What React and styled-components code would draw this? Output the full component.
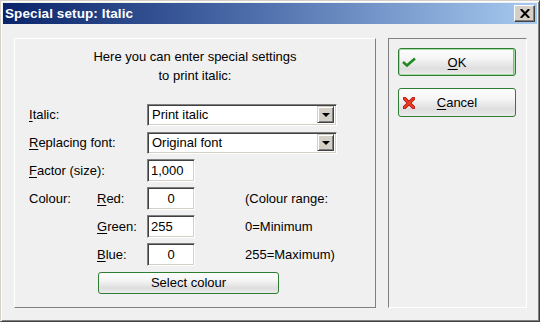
import React from 'react'
import styled, { createGlobalStyle } from 'styled-components'

const Global = createGlobalStyle`
  html, body {
    margin: 0;
    padding: 0;
    background: #f0f0f0;
  }
  body {
    font-family: "Liberation Sans", Arial, sans-serif;
    font-size: 13px;
    color: #000;
  }
`

const Window = styled.div`
  width: 540px;
  height: 322px;
  box-sizing: border-box;
  display: flex;
  flex-direction: column;
  background: #f0f0f0;
  border: 1px solid;
  border-color: #d4d0c8 #404040 #404040 #d4d0c8;
  box-shadow: inset 1px 1px #fff, inset -1px -1px #808080;
  padding: 2px;
`

const TitleBar = styled.div`
  height: 21px;
  flex: none;
  display: flex;
  align-items: center;
  justify-content: space-between;
  padding: 0 2px 0 2px;
  background: linear-gradient(to right, #0a246a 0%, #4a6aa8 45%, #a6caf0 100%);
`

const TitleText = styled.span`
  color: #fff;
  font-weight: bold;
  font-size: 13.5px;
  letter-spacing: 0.1px;
`

const CloseButton = styled.div`
  width: 21px;
  height: 17px;
  box-sizing: border-box;
  background: #d4d0c8;
  border: 1px solid;
  border-color: #fff #404040 #404040 #fff;
  box-shadow: inset -1px -1px #808080;
  display: flex;
  align-items: center;
  justify-content: center;
`

const Client = styled.div`
  flex: 1;
  display: flex;
  gap: 12px;
  padding: 14px 10px 11px 11px;
`

const MainPanel = styled.div`
  width: 362px;
  box-sizing: border-box;
  border: 1px solid;
  border-color: #fff #808080 #808080 #fff;
  padding: 8px 14px 0 14px;
`

const SidePanel = styled.div`
  flex: 1;
  box-sizing: border-box;
  border: 1px solid;
  border-color: #808080 #fff #fff #808080;
  padding: 9px 0 0 9px;
  display: flex;
  flex-direction: column;
  gap: 12px;
`

const Intro = styled.p`
  margin: 0;
  text-align: center;
  line-height: 19px;
`

const Form = styled.div`
  margin-top: 18px;
  display: grid;
  grid-template-columns: 68px 50px 48px 50px 1fr;
  grid-auto-rows: 23px;
  row-gap: 5px;
  align-items: center;
`

const Label = styled.span`
  grid-column: ${p => p.$col || 1} / span ${p => p.$span || 1};
  white-space: nowrap;
`

const Key = styled.span`
  text-decoration: underline;
  text-underline-offset: 2px;
`

const Note = styled.span`
  grid-column: 5;
  white-space: nowrap;
`

const Combo = styled.div`
  grid-column: 3 / span 3;
  width: 190px;
  height: 22px;
  box-sizing: border-box;
  background: #fff;
  border: 1px solid;
  border-color: #808080 #fff #fff #808080;
  box-shadow: inset 1px 1px #404040, inset -1px -1px #d4d0c8;
  display: flex;
  align-items: center;
  justify-content: space-between;
  padding: 2px 2px 2px 4px;
`

const DropButton = styled.div`
  width: 17px;
  height: 17px;
  box-sizing: border-box;
  background: #d4d0c8;
  border: 1px solid;
  border-color: #d4d0c8 #404040 #404040 #d4d0c8;
  box-shadow: inset 1px 1px #fff, inset -1px -1px #808080;
  display: flex;
  align-items: center;
  justify-content: center;
`

const Arrow = styled.div`
  width: 0;
  height: 0;
  border-left: 4px solid transparent;
  border-right: 4px solid transparent;
  border-top: 4px solid #000;
`

const Field = styled.div`
  grid-column: 3;
  width: 48px;
  height: 23px;
  box-sizing: border-box;
  background: #fff;
  border: 1px solid;
  border-color: #808080 #fff #fff #808080;
  box-shadow: inset 1px 1px #404040, inset -1px -1px #d4d0c8;
  display: flex;
  align-items: center;
  justify-content: ${p => (p.$center ? 'center' : 'flex-start')};
  padding: 0 3px 0 3px;
`

const Button = styled.div`
  box-sizing: border-box;
  border: 1px solid #2f7d32;
  border-radius: 3px;
  background: linear-gradient(to bottom, #fdfdfd 0%, #f6f6f6 35%, #dedede 75%, #ececec 100%);
  box-shadow: ${p => (p.$focus ? 'inset 0 0 0 1px #a6dca6, inset -2px 0 0 #7cc47c' : 'none')};
  display: grid;
  grid-template-columns: 20px 1fr 20px;
  align-items: center;
  justify-items: center;
`

const DialogButton = styled(Button)`
  width: 118px;
  height: ${p => p.$h || 28}px;
`

const ColourButton = styled(Button)`
  grid-column: 2 / span 4;
  width: 181px;
  height: 22px;
  margin-left: 1px;
`

const ButtonText = styled.span`
  grid-column: 2;
`

const CheckIcon = () => (
  <svg width="14" height="10" viewBox="0 0 14 10">
    <path d="M1 5 L5 8.5 L13 1.5" fill="none" stroke="#1f8a1f" strokeWidth="2.6" strokeLinejoin="miter" />
  </svg>
)

const CrossIcon = () => (
  <svg width="12" height="12" viewBox="0 0 12 12">
    <path d="M1.5 1.5 L10.5 10.5 M10.5 1.5 L1.5 10.5" stroke="#a01010" strokeWidth="3.6" strokeLinecap="round" />
    <path d="M1.5 1.5 L10.5 10.5 M10.5 1.5 L1.5 10.5" stroke="#f03a20" strokeWidth="2.2" strokeLinecap="round" />
  </svg>
)

const CloseIcon = () => (
  <svg width="10" height="9" viewBox="0 0 10 9">
    <path d="M0.8 0 L9.2 9 M9.2 0 L0.8 9" stroke="#000" strokeWidth="2" />
  </svg>
)

export default function App() {
  return (
    <>
      <Global />
      <Window>
        <TitleBar>
          <TitleText>Special setup: Italic</TitleText>
          <CloseButton>
            <CloseIcon />
          </CloseButton>
        </TitleBar>
        <Client>
          <MainPanel>
            <Intro>
              Here you can enter special settings
              <br />
              to print italic:
            </Intro>
            <Form>
              <Label $span={2}><Key>I</Key>talic:</Label>
              <Combo>
                <span>Print italic</span>
                <DropButton><Arrow /></DropButton>
              </Combo>

              <Label $span={2}><Key>R</Key>eplacing font:</Label>
              <Combo>
                <span>Original font</span>
                <DropButton><Arrow /></DropButton>
              </Combo>

              <Label $span={2}><Key>F</Key>actor (size):</Label>
              <Field>1,000</Field>

              <Label>Colour:</Label>
              <Label $col={2}><Key>R</Key>ed:</Label>
              <Field $center>0</Field>
              <Note>(Colour range:</Note>

              <Label $col={2}><Key>G</Key>reen:</Label>
              <Field>255</Field>
              <Note>0=Minimum</Note>

              <Label $col={2}><Key>B</Key>lue:</Label>
              <Field $center>0</Field>
              <Note>255=Maximum)</Note>

              <ColourButton>
                <ButtonText>Select colour</ButtonText>
              </ColourButton>
            </Form>
          </MainPanel>
          <SidePanel>
            <DialogButton $focus>
              <CheckIcon />
              <ButtonText><Key>O</Key>K</ButtonText>
            </DialogButton>
            <DialogButton $h={29}>
              <CrossIcon />
              <ButtonText><Key>C</Key>ancel</ButtonText>
            </DialogButton>
          </SidePanel>
        </Client>
      </Window>
    </>
  )
}
